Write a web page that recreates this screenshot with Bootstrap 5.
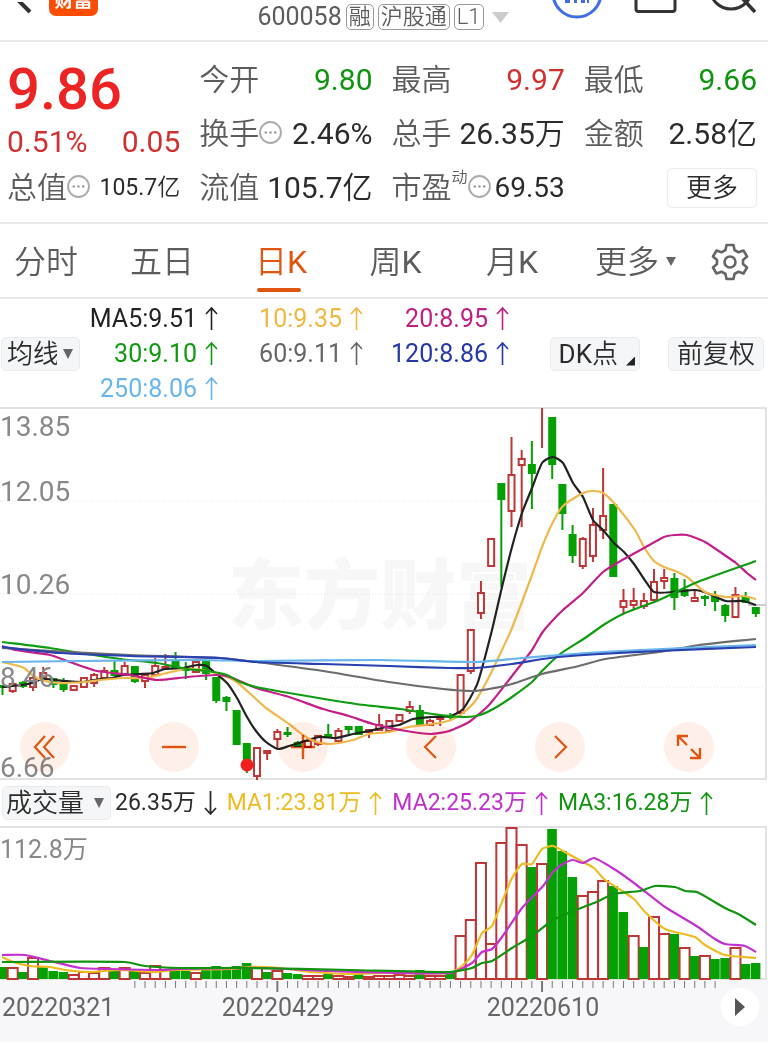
<!DOCTYPE html>
<html lang="zh-CN">
<head>
<meta charset="utf-8">
<meta name="viewport" content="width=device-width, initial-scale=1">
<title>600058 日K</title>
<link href="https://cdn.jsdelivr.net/npm/bootstrap@5.3.0/dist/css/bootstrap.min.css" rel="stylesheet">
<style>
:root { --up:#d03030; --down:#109410; --muted:#5c5c5c; --ink:#2b2b2b; --rule:#e8eaec; --accent:#e05510; }
body { font-family:Roboto,"Noto Sans CJK SC",sans-serif; color:var(--ink); background:#fff; font-size:30px; line-height:36px; }
button, select { font-family:inherit; }
svg { display:block; }
.rule-b { border-bottom:2px solid var(--rule); }
.t-up { color:var(--up); } .t-down { color:var(--down); } .t-muted { color:var(--muted); }

.topbar { height:42px; overflow:hidden; }
.side { flex:1 1 0; }
.brand-chip { background:#fc4c06; color:#fff; border-radius:7px; width:49px; height:36px; margin-top:-20px; font-size:19px; line-height:42px; font-weight:700; text-align:center; }
.code { font-size:25px; line-height:34px; padding-left:9px; }
.tag-box { font-size:22px; line-height:24px; border:1px solid #999; border-radius:5px; padding:0 2px; font-weight:350; }
.head-icons { gap:20px; padding-right:11px; }

.quote { display:grid; grid-template-columns:repeat(4,1fr); column-gap:19px; row-gap:18px; padding:20px 11px 16px 7px; }
.quote .cell { display:flex; justify-content:space-between; align-items:center; white-space:nowrap; height:36px; }
.quote dt { font-weight:350; color:var(--muted); display:flex; align-items:center; }
.quote dd { margin:0; }
.price { grid-row:1 / span 2; display:flex; flex-direction:column; justify-content:space-between; }
.price strong { font-size:58px; line-height:54px; font-weight:500; color:#ec2424; }
.price .delta { line-height:28px; margin-bottom:-4px; }
.num-s { font-size:23px; } .num-m { font-size:28px; }
.dyn { font-size:16px; line-height:16px; align-self:flex-start; }
.info-btn { border:0; background:none; padding:0; }
dt .info-btn { padding-bottom:4px; }
.more-btn { border:1px solid var(--rule); border-radius:5px; background:#fff; font-size:26px; line-height:36px; font-weight:350; width:90px; padding:1px 0; color:var(--ink); }
.unit { font-weight:350; }

.periods { display:grid; grid-template-columns:92fr 140fr 98fr 131fr 102fr 146fr 42fr; padding-right:17px; height:75px; font-size:32px; }
.periods button { border:0; background:none; padding:2px 0 0; font-weight:350; color:var(--muted); display:flex; align-items:center; justify-content:center; white-space:nowrap; position:relative; gap:6px; }
.periods .k { font-weight:400; }
.periods .active { color:var(--accent); }
.periods .active::after { content:""; position:absolute; bottom:5px; left:50%; margin-left:-24px; width:44px; height:4px; border-radius:2px; background:var(--accent); }

.averages { height:108px; padding:2px 4px 1px 1px; }
.pill, .pill:focus { background-color:#f5f6f8; border:1px solid var(--rule); border-radius:5px; font-size:26px; line-height:32px; padding:0 8px; color:var(--ink); height:34px; font-weight:350; white-space:nowrap; }
select.pill { width:auto; padding:0 22px 0 5px; background-position:right 5px center; background-size:12px 10px;
  --bs-form-select-bg-img:url("data:image/svg+xml,%3csvg xmlns='http://www.w3.org/2000/svg' viewBox='0 0 12 10'%3e%3cpath d='M1 0h10L6 10z' fill='%23666'/%3e%3c/svg%3e");
  background-image:var(--bs-form-select-bg-img); box-shadow:none; }
select.sel-ma { width:79px; }
select.sel-vol { width:109px; padding-left:3px; }
.corner { width:9px; height:9px; background:#222; clip-path:polygon(100% 0,100% 100%,0 100%); }
.ma-grid { display:grid; grid-template-columns:138px 145px 146px; font-size:25px; line-height:35px; justify-items:end; }
.ma { display:flex; align-items:center; gap:8px; white-space:nowrap; }
.ma svg { flex:none; }

.plot text { font-family:Roboto,"Noto Sans CJK SC",sans-serif; }
.plot { width:100%; height:auto; }
.chart-tools { position:absolute; left:0; right:0; bottom:8px; padding:0 54px 0 20px; }
.round { width:50px; height:50px; border:0; border-radius:50%; background:#feefe8; mix-blend-mode:multiply; padding:0; display:flex; align-items:center; justify-content:center; }
.vol-head { height:46px; font-size:23px; line-height:32px; padding-left:2px; gap:10px; white-space:nowrap; }
.vol-head .sel-vol { margin-right:-6px; }
.axis { background:#f7f7fa; position:relative; }
.play { position:absolute; right:9px; top:8px; width:38px; height:38px; border:0; border-radius:50%; background:#fff; padding:0; }
</style>
</head>
<body>
<svg width="0" height="0" class="position-absolute" aria-hidden="true">
  <defs>
    <symbol id="up" viewBox="0 0 13 25"><path d="M6.500 24V2M1 8l5.500-6L12 8" fill="none" stroke="currentColor" stroke-width="1.600"/></symbol>
    <symbol id="dn" viewBox="0 0 13 25"><path d="M6.500 0v23M1 17l5.500 6L12 17" fill="none" stroke="currentColor" stroke-width="1.800"/></symbol>
    <symbol id="info" viewBox="0 0 22 22"><circle cx="11" cy="11" r="10" fill="none" stroke="#aaa" stroke-width="1.800"/><path d="M5.500 11h2M10 11h2M14.500 11h2" stroke="#888" stroke-width="2"/></symbol>
  </defs>
</svg>

<header class="topbar rule-b d-flex align-items-start">
  <div class="side d-flex">
    <button class="info-btn ms-3" aria-label="返回"><svg width="17" height="12" viewBox="0 0 17 12"><path d="M0-4l14 14" stroke="#333" stroke-width="4"/></svg></button>
    <span class="brand-chip ms-3">财富</span>
  </div>
  <div class="code d-flex align-items-center gap-1 t-muted">
    <span>600058</span><span class="tag-box">融</span><span class="tag-box">沪股通</span><span class="tag-box">L1</span>
    <svg class="ms-1" width="17" height="11" viewBox="0 0 17 11"><path d="M0 0h17l-8.500 11z" fill="#ccc"/></svg>
  </div>
  <div class="side head-icons d-flex justify-content-end">
    <svg width="52" height="19" viewBox="0 0 52 19"><circle cx="26" cy="-7" r="24" fill="none" stroke="#3f6de8" stroke-width="3"/><path d="M14 0h5v3h-5zM23 0h3v3h-3zM30 0h4v3h-4zM36 0h2v3h-2z" fill="#3f6de8"/></svg>
    <svg class="ms-2 me-2" width="48" height="14" viewBox="0 0 48 14"><path d="M5-4V9q0 2.500 2.500 2.500h34q2.500 0 2.500-2.500V-4" fill="none" stroke="#333" stroke-width="3"/></svg>
    <svg width="50" height="14" viewBox="0 0 50 14"><circle cx="24" cy="-12" r="21" fill="none" stroke="#333" stroke-width="3"/><path d="M36-1l12 13" stroke="#333" stroke-width="3.500"/></svg>
  </div>
</header>

<dl class="quote rule-b mb-0">
  <div class="price"><strong>9.86</strong><div class="delta d-flex justify-content-between t-up"><span>0.51%</span><span>0.05</span></div></div>
  <div class="cell"><dt>今开</dt><dd class="t-down">9.80</dd></div>
  <div class="cell"><dt>最高</dt><dd class="t-up">9.97</dd></div>
  <div class="cell"><dt>最低</dt><dd class="t-down">9.66</dd></div>
  <div class="cell"><dt>换手<button class="info-btn" aria-label="换手说明"><svg width="23" height="23"><use href="#info"/></svg></button></dt><dd>2.46%</dd></div>
  <div class="cell"><dt>总手</dt><dd>26.35<span class="unit">万</span></dd></div>
  <div class="cell"><dt>金额</dt><dd>2.58<span class="unit">亿</span></dd></div>
  <div class="cell"><dt>总值<button class="info-btn" aria-label="总值说明"><svg width="23" height="23"><use href="#info"/></svg></button></dt><dd class="num-s">105.7<span class="unit">亿</span></dd></div>
  <div class="cell"><dt>流值</dt><dd>105.7<span class="unit">亿</span></dd></div>
  <div class="cell"><dt>市盈<span class="dyn">动</span><button class="info-btn" aria-label="市盈说明"><svg width="23" height="23"><use href="#info"/></svg></button></dt><dd class="num-m">69.53</dd></div>
  <div class="cell justify-content-end"><button class="more-btn">更多</button></div>
</dl>

<nav class="periods rule-b">
  <button>分时</button>
  <button>五日</button>
  <button class="active" aria-current="true"><span>日<span class="k">K</span></span></button>
  <button><span>周<span class="k">K</span></span></button>
  <button><span>月<span class="k">K</span></span></button>
  <button>更多<svg width="12" height="10" viewBox="0 0 12 10"><path d="M1 0h10L6 9z" fill="#666"/></svg></button>
  <button aria-label="设置"><svg width="38" height="38" viewBox="0 0 38 38" fill="none" stroke="#666" stroke-width="2.600" stroke-linejoin="round"><path d="M15.500 2h7l1 5 4 2.300 5-1.800 3.500 6-4 3.500v4l4 3.500-3.500 6-5-1.800-4 2.300-1 5h-7l-1-5-4-2.300-5 1.800-3.500-6 4-3.500v-4l-4-3.500 3.500-6 5 1.800 4-2.300z"/><circle cx="19" cy="19" r="5.500"/></svg></button>
</nav>

<section class="averages d-flex align-items-center">
  <select class="form-select pill sel-ma" aria-label="指标"><option>均线</option></select>
  <div class="ma-grid">
    <span class="ma" style="color:#222">MA5:9.51<svg width="13" height="25"><use href="#up"/></svg></span>
    <span class="ma" style="color:#f0b840">10:9.35<svg width="13" height="25"><use href="#up"/></svg></span>
    <span class="ma" style="color:#c01e80">20:8.95<svg width="13" height="25"><use href="#up"/></svg></span>
    <span class="ma" style="color:#109a10">30:9.10<svg width="13" height="25"><use href="#up"/></svg></span>
    <span class="ma" style="color:#666">60:9.11<svg width="13" height="25"><use href="#up"/></svg></span>
    <span class="ma" style="color:#2438a8">120:8.86<svg width="13" height="25"><use href="#up"/></svg></span>
    <span class="ma" style="color:#68b4ec">250:8.06<svg width="13" height="25"><use href="#up"/></svg></span>
  </div>
  <button class="pill ms-auto me-4 d-flex align-items-end gap-2 pe-1"><span><span class="fw-normal">DK</span>点</span><span class="corner mb-1"></span></button>
  <button class="pill ms-1">前复权</button>
</section>

<section class="position-relative">
  <svg id="price" class="plot" viewBox="0 407 768 373" role="img" aria-label="日K线图">
    <path d="M0 408H766V779H0" fill="none" stroke="#e2e2e2" stroke-width="2"/>
    <text x="228" y="623" font-size="76" font-weight="900" fill="#f7f7f7">东方财富</text>
    <path d="M0 501H766M0 594H766M0 687H766" stroke="#e4e4e4" stroke-dasharray="1 2"/>
    <path d="M748 605H766" stroke="#ccc" stroke-width="2"/>
    <g id="candles" stroke-width="2"></g>
    <g id="maLines" fill="none" stroke-width="2.200"></g>
    <circle cx="247" cy="765" r="6.500" fill="#f02020"/>
    <g font-size="28" fill="#888"><text x="0" y="436">13.85</text><text x="0" y="501">12.05</text><text x="0" y="594">10.26</text><text x="0" y="687">8.46</text><text x="0" y="777">6.66</text></g>
  </svg>
  <div class="chart-tools d-flex justify-content-between">
    <button class="round" aria-label="最早"><svg width="24" height="26" viewBox="0 0 24 26" fill="none" stroke="#e05510" stroke-width="2.200"><path d="M12 2L2 13l10 11M21 2L11 13l10 11"/></svg></button>
    <button class="round" aria-label="缩小"><svg width="26" height="26" viewBox="0 0 26 26" stroke="#e05510" stroke-width="2.400"><path d="M1 13h24"/></svg></button>
    <button class="round" aria-label="放大"><svg width="26" height="26" viewBox="0 0 26 26" stroke="#e05510" stroke-width="2.400"><path d="M1 13h24M13 1v24"/></svg></button>
    <button class="round" aria-label="左移"><svg width="24" height="26" viewBox="0 0 24 26" fill="none" stroke="#e05510" stroke-width="2.200"><path d="M17 2L6 13l11 11"/></svg></button>
    <button class="round" aria-label="右移"><svg width="24" height="26" viewBox="0 0 24 26" fill="none" stroke="#e05510" stroke-width="2.200"><path d="M7 2l11 11L7 24"/></svg></button>
    <button class="round" aria-label="全屏"><svg width="26" height="26" viewBox="0 0 26 26" fill="none" stroke="#e05510" stroke-width="2.400"><path d="M2 12V2h10M2 2l9 9M24 14v10H14M24 24l-9-9"/></svg></button>
  </div>
</section>

<section class="vol-head d-flex align-items-center">
  <select class="form-select pill sel-vol" aria-label="副图指标"><option>成交量</option></select>
  <span class="ma">26.35万<svg width="13" height="25"><use href="#dn"/></svg></span>
  <span class="ma" style="color:#ecbc20">MA1:23.81万<svg width="13" height="25"><use href="#up"/></svg></span>
  <span class="ma" style="color:#c030d0">MA2:25.23万<svg width="13" height="25"><use href="#up"/></svg></span>
  <span class="ma" style="color:#109410">MA3:16.28万<svg width="13" height="25"><use href="#up"/></svg></span>
</section>

<svg id="volume" class="plot" viewBox="0 826 768 154" role="img" aria-label="成交量图">
  <path d="M0 827H766V979H0" fill="none" stroke="#e2e2e2" stroke-width="2"/>
  <text x="0" y="858" font-size="25" fill="#888">112.8万</text>
  <g id="bars" stroke-width="2"></g>
  <g id="volLines" fill="none" stroke-width="2.200"></g>
</svg>
<div class="axis">
  <svg id="dates" class="plot" viewBox="0 980 768 62" role="img" aria-label="日期轴">
    <g id="ticks"></g>
    <g font-size="25" fill="#666"><text x="2" y="1016">20220321</text><text x="278" y="1016" text-anchor="middle">20220429</text><text x="543" y="1016" text-anchor="middle">20220610</text></g>
  </svg>
  <button class="play" aria-label="下一页"><svg width="38" height="38" viewBox="0 0 38 38"><path d="M14 10v18l10-9z" fill="#555"/></svg></button>
</div>

<script>
const X = i => 2.5 + 10.18 * i;
const RED = '#be3636', GREEN = '#04a004';
// colour, high, body top, body bottom, low
const candles = `g 685 686 687 695|r 682 684 691 693|g 681 683 686 688|r 676 678 687 691|r 667 673 678 680|g 678 679 684 688|g 678 684 689 692|r 686 686 690 690|r 677 678 687 688|r 673 675 683 687|r 667 671 678 678|g 661 671 675 675|r 662 666 674 674|g 666 667 681 683|r 675 675 681 688|r 658 666 675 675|r 654 667 668 668|g 652 661 668 668|g 662 668 670 679|r 661 662 672 672|g 660 661 673 680|g 678 678 700 703|g 696 698 701 711|g 711 711 744 744|g 744 744 765 773|r 748 748 776 780|r 750 751 753 760|r 729 732 739 749|g 727 733 734 737|g 741 743 746 746|r 741 741 747 747|r 735 736 744 746|g 724 735 736 736|r 728 731 741 741|g 727 727 729 734|g 727 727 734 735|r 730 730 732 738|r 714 725 730 730|r 720 721 731 733|r 715 715 721 721|r 701 707 711 714|g 705 711 724 726|r 719 721 725 725|r 715 718 719 726|g 713 716 717 720|r 675 675 713 713|r 630 630 671 674|r 581 593 613 619|r 539 539 566 566|g 484 484 499 587|r 437 475 511 527|r 450 459 465 527|g 441 465 473 509|r 408 408 408 448|g 418 418 464 479|g 485 485 513 530|g 525 535 555 563|r 537 539 566 569|r 508 525 556 562|r 468 516 530 539|g 505 505 576 576|r 589 601 607 614|r 588 601 605 609|r 593 601 606 609|r 569 582 600 600|r 569 578 581 589|g 573 579 597 610|g 579 590 595 597|r 589 598 601 601|g 595 597 598 606|g 591 597 601 611|g 604 606 615 622|r 587 595 617 617|g 592 597 602 602|g 608 608 613 617`.split('|').map(s => s.split(' '));
document.getElementById('candles').innerHTML = candles.map(([c, h, t, b, l], i) => {
  const x = X(i), k = c === 'r' ? RED : GREEN;
  return `<path d="M${x} ${h}V${t}M${x} ${b}V${l}" stroke="${k}"/><rect x="${x - 3}" y="${t}" width="6" height="${b - t}" fill="${c === 'r' ? '#fff' : k}" stroke="${k}"/>`;
}).join('');

// top edge of each volume bar
const bars = `g967 r967 g972 r957 g967 g971 g972 r974 r971 r972 r967 g971 r967 g970 r972 r965 r969 g967 g971 r972 g969 g966 g970 g966 g963 r967 g972 r970 g973 g974 r975 r975 g974 r975 r976 g974 r976 r975 r975 r974 r975 g970 r975 r975 g972 r935 r919 r862 r943 r842 r827 r844 g867 r863 g829 g851 g877 r895 r891 r880 g886 g912 r935 g947 r916 r933 g934 r947 g956 r955 g959 g958 r947 g964 g963`.split(' ');
document.getElementById('bars').innerHTML = bars.map((s, i) => {
  const y = +s.slice(1);
  return s[0] === 'r'
    ? `<rect x="${X(i) - 5}" y="${y + 1}" width="10" height="${978 - y}" fill="#fff" stroke="${RED}"/>`
    : `<rect x="${X(i) - 5}" y="${y}" width="9.6" height="${979 - y}" fill="${GREEN}"/>`;
}).join('');

// smooth curve through the given points
function curve(str) {
  const p = str.split(' ').map(s => s.split(',').map(Number));
  let d = `M${p[0]}`;
  for (let i = 0; i < p.length - 1; i++) {
    const a = p[i - 1] || p[i], b = p[i], c = p[i + 1], e = p[i + 2] || c, m = (c[0] - b[0]) / 5;
    const sb = (c[1] - a[1]) / (c[0] - a[0]), sc = (e[1] - b[1]) / (e[0] - b[0]);
    d += `C${b[0] + m} ${b[1] + sb * m} ${c[0] - m} ${c[1] - sc * m} ${c}`;
  }
  return d;
}
const draw = (id, list) => document.getElementById(id).innerHTML = list.map(([c, s]) => `<path stroke="${c}" d="${curve(s)}"/>`).join('');
draw('maLines', [
  ['#222', '2,687 22,685 32,683 43,679 65,681 83,682 100,679 112,678 123,675 140,674 153,673 165,669 183,668 197,665 207,666 214,672 227,683 237,698 247,717 256,731 266,742 278,749 289,746 299,743 319,737 336,738 353,734 369,731 386,727 399,725 413,719 433,717 451,716 462,710 469,700 478,682 492,630 502,587 512,547 522,513 532,488 542,463 553,457 563,463 573,483 583,497 593,520 603,530 614,543 624,552 634,564 644,579 654,592 673,592 695,590 707,593 726,601 743,601 756,605'],
  ['#f0b84c', '2,662 15,665 24,668 35,677 45,681 60,683 84,682 100,680 123,678 145,678 167,673 187,669 207,671 227,677 238,683 256,699 266,708 289,724 303,735 316,742 331,744 353,740 369,734 389,732 409,727 433,724 451,720 463,713 476,700 489,677 502,650 512,628 532,575 542,547 553,522 563,506 583,493 593,491 603,493 614,503 635,530 644,547 654,561 664,567 675,571 687,577 705,592 726,597 743,596 756,599'],
  ['#c41e88', '2,646 15,650 50,655 70,662 97,671 130,675 157,680 187,677 217,675 230,677 256,688 289,697 323,709 349,716 373,724 406,731 431,734 449,731 469,722 489,705 512,676 532,650 542,633 553,620 563,610 583,593 603,572 624,559 644,548 664,537 675,535 687,535 705,542 726,556 736,563 747,573 756,580'],
  ['#109c10', '2,642 50,648 80,653 120,659 157,663 187,669 207,671 227,675 240,682 256,687 289,693 356,704 400,709 440,715 466,717 480,715 495,708 512,697 532,682 542,671 560,654 585,638 605,624 625,613 659,600 695,583 756,561'],
  ['#6c6c6c', '2,648 70,652 130,655 220,658 256,662 323,671 389,682 443,689 473,691 489,689 512,684 542,674 579,666 605,659 659,652 699,645 756,639'],
  ['#68b4ec', '2,662 80,661 200,660 256,661 380,660 475,662 512,659 560,655 620,651 756,645'],
  ['#2840b0', '2,647 60,653 130,656 220,658 256,662 323,664 389,666 450,668 475,668 512,664 550,658 600,654 659,651 756,647']
]);
draw('volLines', [
  ['#ecbc20', '2,957 13,962 30,966 50,967 65,970 90,972 120,970 155,972 175,970 230,969 250,967 280,968 310,972 350,974 384,973 450,973 462,966 472,955 482,933 492,926 502,902 512,878 522,864 532,864 542,849 553,846 563,851 583,862 594,868 604,879 634,899 644,911 665,929 695,937 705,945 725,955 756,958'],
  ['#c430d0', '2,955 25,955 50,961 80,968 110,969 160,970 180,969 260,968 330,971 450,973 472,963 482,952 492,949 502,937 522,908 543,886 553,872 563,864 573,860 583,863 594,858 614,869 634,883 665,907 695,925 715,939 725,944 745,946 756,952'],
  ['#109410', '2,962 125,962 145,966 180,968 250,968 350,970 450,972 472,968 482,963 492,961 512,948 532,936 553,920 573,911 594,903 614,894 640,891 655,886 675,887 685,891 697,892 725,908 740,915 756,925']
]);
let ticks = '';
for (let i = 13; i <= 70; i++) {
  const major = i === 27 || i === 53;
  ticks += `<path d="M${X(i)} 981V${major ? 992 : 988}" stroke="#777" stroke-width="${major ? 2 : 1}"/>`;
}
document.getElementById('ticks').innerHTML = ticks;
</script>
<script src="https://cdn.jsdelivr.net/npm/bootstrap@5.3.0/dist/js/bootstrap.bundle.min.js"></script>
</body>
</html>
